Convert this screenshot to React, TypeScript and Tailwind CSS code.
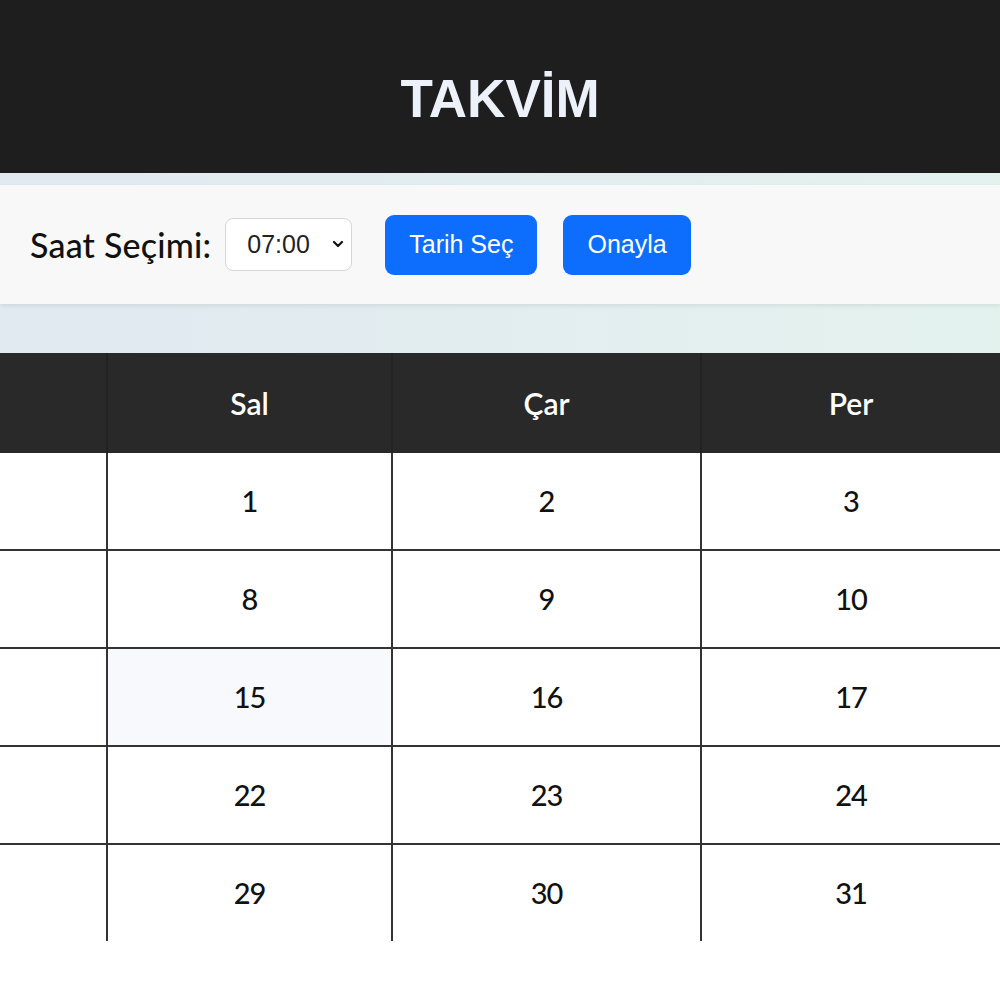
import { FC } from 'react'

const days = ['Pzt', 'Sal', 'Çar', 'Per', 'Cum', 'Cmt', 'Paz']

const weeks: (number | null)[][] = [
    [null, 1, 2, 3, 4, 5, 6],
    [7, 8, 9, 10, 11, 12, 13],
    [14, 15, 16, 17, 18, 19, 20],
    [21, 22, 23, 24, 25, 26, 27],
    [28, 29, 30, 31, null, null, null]
]

const roundFont = "font-['Lato','Noto_Sans',sans-serif]"
const arial = "font-['Liberation_Sans',Arial,sans-serif]"

const Toolbar: FC = () => (
    <div className="bg-gradient-to-r from-[#e1e9f1] to-[#e4f2ee] pt-[12px] pb-[49px]">
        <div className="h-[119px] bg-[#f8f8f8] shadow-[0_2px_5px_rgba(0,0,0,0.08)] flex items-center pl-[30px]">
            <label className={`${roundFont} text-[34px] font-medium text-[#111] tracking-[0.2px]`}>
                Saat Seçimi:
            </label>

            {/* time select */}
            <div className="relative ml-[14px] w-[127px] h-[53px]">
                <select
                    defaultValue="07:00"
                    className={`${arial} appearance-none w-full h-full rounded-[8px] border border-[#d6d6d6] bg-white pl-[21px] text-[25px] text-[#222] outline-none`}
                >
                    {['07:00', '08:00', '09:00', '10:00', '11:00', '12:00'].map(t => (
                        <option key={t} value={t}>{t}</option>
                    ))}
                </select>
                <svg className="absolute right-[8px] top-[22px] w-[12px] h-[9px] pointer-events-none" viewBox="0 0 12 9" fill="none">
                    <path d="M2 2l4 4 4-4" stroke="#111" strokeWidth="2.2" strokeLinecap="round" strokeLinejoin="round" />
                </svg>
            </div>

            <div className="flex gap-[26px] ml-[33px]">
                <button className={`${arial} h-[60px] px-[24px] rounded-[9px] bg-[#0d6efd] text-white text-[25px]`}>
                    Tarih Seç
                </button>
                <button className={`${arial} h-[60px] px-[24px] rounded-[9px] bg-[#0d6efd] text-white text-[25px]`}>
                    Onayla
                </button>
            </div>
        </div>
    </div>
)

const Calendar: FC = () => (
    <div className="overflow-hidden">
        <div className={`${roundFont} -ml-[194px] w-max grid grid-cols-[302px_285px_309px_300px_300px_300px_300px]`}>
            {days.map(d => (
                <div key={d} className="h-[100px] bg-[#292929] border-r-2 border-[#222] flex items-center justify-center text-white text-[30px] font-semibold">
                    {d}
                </div>
            ))}

            {weeks.map((week, wi) =>
                week.map((n, di) => {
                    const last = wi === weeks.length - 1
                    const today = n === 15
                    return (
                        <div
                            key={`${wi}-${di}`}
                            className={`flex items-center justify-center border-r-2 border-[#333] text-[29px] font-medium text-[#111] tracking-[-1px] ${last ? 'h-[96px]' : 'h-[98px] border-b-2'} ${today ? 'bg-[#f7f9fd]' : 'bg-white'}`}
                        >
                            {n ?? ''}
                        </div>
                    )
                })
            )}
        </div>
    </div>
)

export default function App() {
    return (
        <div className="min-h-screen bg-white">
            <header className="h-[173px] bg-[#1e1e1e] flex items-center justify-center">
                <h1 className={`${arial} text-[53px] font-bold text-[#edf2fa] pt-[24px]`}>TAKVİM</h1>
            </header>
            <Toolbar />
            <Calendar />
        </div>
    )
}
